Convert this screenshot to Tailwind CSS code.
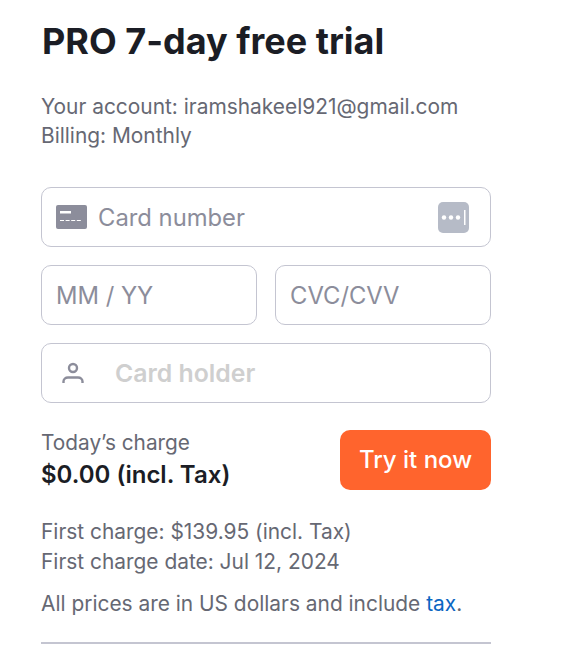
<!doctype html>
<html lang="en">
<head>
    <meta charset="utf-8">
    <title>PRO 7-day free trial</title>
    <script src="https://cdn.jsdelivr.net/npm/@tailwindcss/browser@4"></script>
</head>
<body class="bg-white font-['Inter',sans-serif] overflow-hidden">
<main class="w-[450px] ml-[41px] pt-[20px]">
    <h1 class="ml-[1px] text-[36px] leading-[42px] font-bold text-[#1b1d25]">PRO 7-day free trial</h1>

    <div class="mt-[30px] text-[20.9px] leading-[29px] text-[#666873]">
        <p>Your account: iramshakeel921@gmail.com</p>
        <p>Billing: Monthly</p>
    </div>

    <div class="mt-[37px] flex flex-col gap-[18px]">
        <div class="h-[60px] flex items-center border border-[#c4c5d1] rounded-[10px] pl-[14px] pr-[21px]">
            <svg class="w-[31px] h-[24px] shrink-0" viewBox="0 0 31 24">
                <rect width="31" height="24" rx="2" fill="#8c8d9b"/>
                <rect x="4" y="6" width="11" height="2.500" fill="#fff"/>
                <path d="M4 15.500h22" stroke="#fff" stroke-width="1.200" stroke-dasharray="4 1.600"/>
            </svg>
            <span class="ml-[11px] pt-[2px] text-[23.8px] text-[#8c8d9b]">Card number</span>
            <svg class="ml-auto w-[31px] h-[31px] shrink-0" viewBox="0 0 31 31">
                <rect width="31" height="31" rx="5" fill="#b6bbc7"/>
                <circle cx="6" cy="15.500" r="2.200" fill="#fff"/>
                <circle cx="13" cy="15.500" r="2.200" fill="#fff"/>
                <circle cx="20" cy="15.500" r="2.200" fill="#fff"/>
                <rect x="26" y="8" width="1.500" height="15" fill="#fff"/>
            </svg>
        </div>

        <div class="grid grid-cols-2 gap-[18px]">
            <div class="h-[60px] flex items-center border border-[#c4c5d1] rounded-[10px] pl-[14px]">
                <span class="pt-[2px] text-[23.8px] text-[#8c8d9b]">MM / YY</span>
            </div>
            <div class="h-[60px] flex items-center border border-[#c4c5d1] rounded-[10px] pl-[14px]">
                <span class="pt-[2px] text-[23.8px] text-[#8c8d9b]">CVC/CVV</span>
            </div>
        </div>

        <div class="h-[60px] flex items-center border border-[#c4c5d1] rounded-[10px] pl-[20px]">
            <svg class="w-[22px] h-[22px] shrink-0" viewBox="0 0 22 22" fill="none" stroke="#8c8d9b" stroke-width="2.400">
                <circle cx="11" cy="6" r="4"/>
                <path d="M1.500 21v-1.500c0-2.500 2-4 4.500-4h10c2.500 0 4.500 1.500 4.500 4v1.500"/>
            </svg>
            <span class="ml-[31px] pt-[2px] text-[24.8px] font-semibold text-[#cfcfcf]">Card holder</span>
        </div>
    </div>

    <div class="mt-[27px] flex items-center justify-between">
        <div>
            <p class="text-[20.8px] leading-[24px] text-[#666873]">Today’s charge</p>
            <p class="mt-[6px] text-[24px] leading-[28px] font-semibold text-[#1b1d25]">$0.00 (incl. Tax)</p>
        </div>
        <button class="w-[151px] h-[60px] bg-[#ff642d] rounded-[10px] text-white text-[24px] font-medium">Try it now</button>
    </div>

    <div class="mt-[27px] text-[20.9px] leading-[30px] text-[#666873]">
        <p>First charge: $139.95 (incl. Tax)</p>
        <p>First charge date: Jul 12, 2024</p>
    </div>

    <p class="mt-[13px] text-[20.9px] leading-[28px] text-[#666873]">All prices are in US dollars and include <a href="#" class="text-[#0a66c2]">tax</a>.</p>

    <hr class="mt-[24px] border-t-2 border-[#c4c5d1]">
</main>
</body>
</html>
